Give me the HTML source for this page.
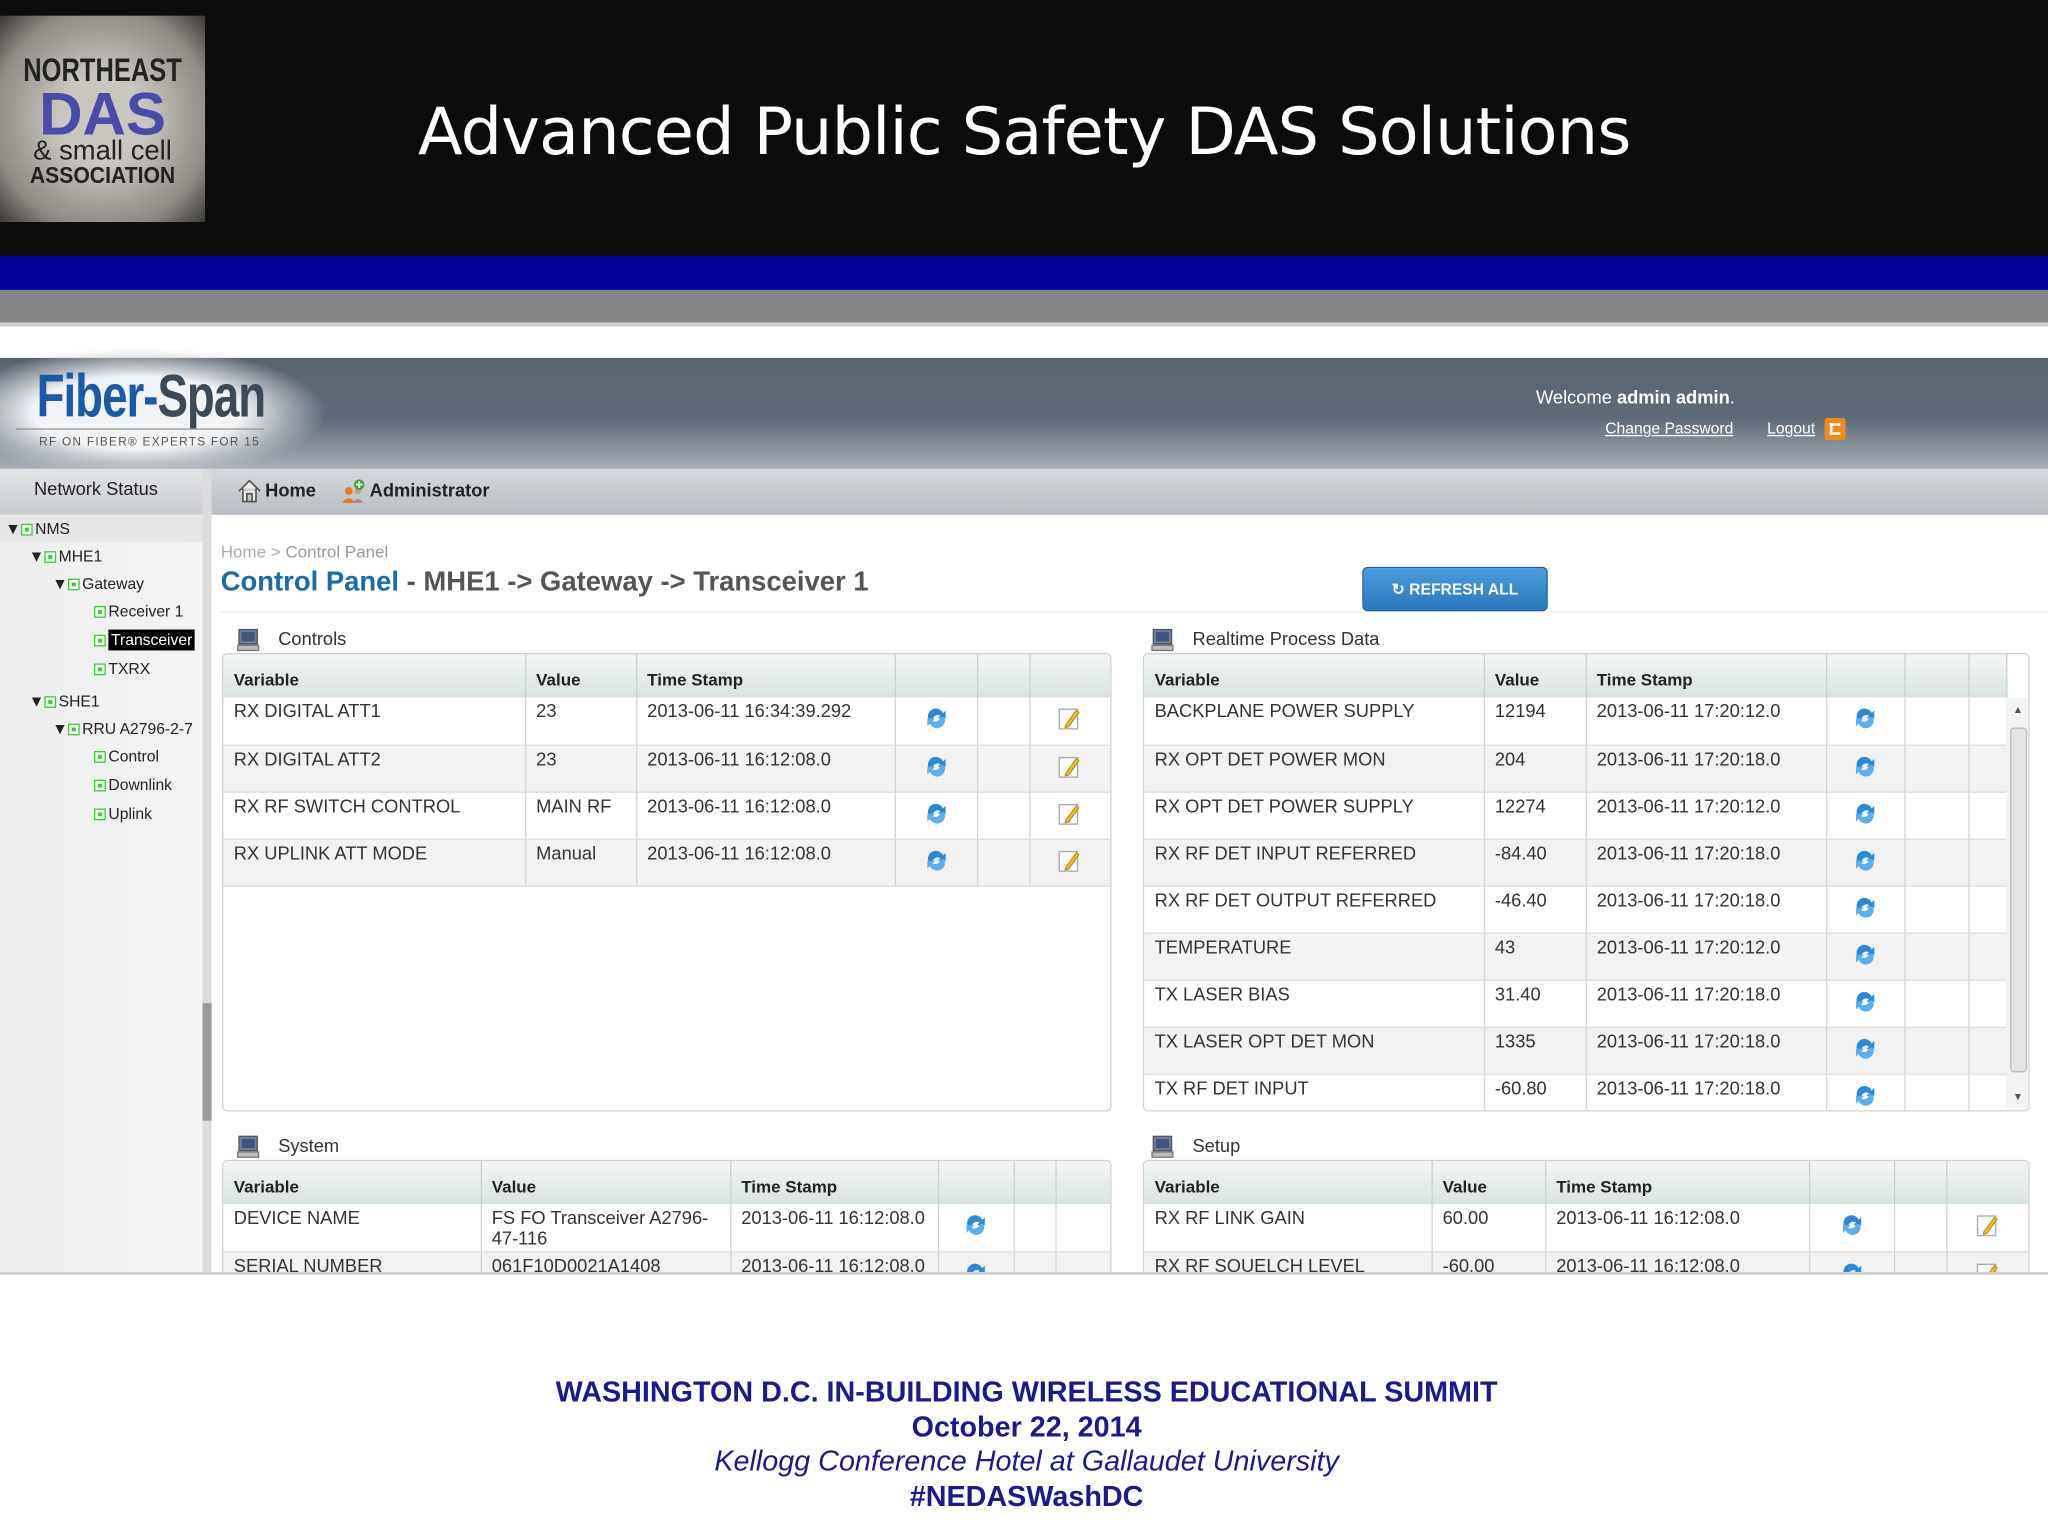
<!DOCTYPE html>
<html><head><meta charset="utf-8"><style>
*{margin:0;padding:0;box-sizing:border-box}
html,body{width:2048px;height:1536px;overflow:hidden;background:#fff}
#w{position:absolute;left:0;top:0;width:1568px;height:1176px;transform:scale(1.306122);transform-origin:0 0;font-family:"Liberation Sans",Arial,sans-serif;background:#fff}
.a{position:absolute}
table{border-collapse:collapse;position:absolute;font-size:14px;color:#333;table-layout:fixed}
td{border-right:1px solid #d4d4d4;vertical-align:top;padding:2px 8px;height:36px;border-bottom:1px solid #ddd}
tr.h td{height:33px;background:linear-gradient(#f2f5f5,#d9e2e2);font-weight:bold;font-size:13px;vertical-align:middle;padding-top:8px;color:#222;border-right:1px solid #c8d0d0;border-bottom:none}
tr.g td{background:#f2f2f2}
.panel{position:absolute;border:1px solid #d0d0d0;border-radius:4px;background:#fff;overflow:hidden}
.ptitle{position:absolute;font-size:14px;color:#333}
.tree{position:absolute;font-size:12px;color:#222;white-space:nowrap}
.sq{display:inline-block;width:9px;height:9px;border:1px solid #3c3;margin-right:2px;vertical-align:-1px;position:relative;background:#fff}
.sq:after{content:"";position:absolute;left:2px;top:2px;width:3px;height:3px;background:#3c3}
</style></head><body><div id="w">
<div class="a" style="left:0;top:0;width:1568px;height:196px;background:#0b0b0b"></div>
<div class="a" style="left:0;top:12px;width:157px;height:158px;background:radial-gradient(ellipse at center,#c9c5bf 30%,#8e8a84 75%,#3a3835 100%)"></div>
<div class="a" style="left:0;top:40px;width:157px;text-align:center;font:bold 25px 'Liberation Sans Narrow','Liberation Sans',sans-serif;color:#222;transform:scaleX(.78)">NORTHEAST</div>
<div class="a" style="left:0;top:64px;width:157px;text-align:center;font:bold 46px 'Liberation Sans',sans-serif;color:#4a4aa8;line-height:46px">DAS</div>
<div class="a" style="left:0;top:104px;width:157px;text-align:center;font:21px 'Liberation Sans',sans-serif;color:#222">&amp; small cell</div>
<div class="a" style="left:0;top:124px;width:157px;text-align:center;font:bold 18px 'Liberation Sans',sans-serif;color:#222;transform:scaleX(.9)">ASSOCIATION</div>
<div class="a" style="left:320px;top:72px;font:50px 'DejaVu Sans','Liberation Sans',sans-serif;color:#fff;letter-spacing:-0.65px;white-space:nowrap">Advanced Public Safety DAS Solutions</div>
<div class="a" style="left:0;top:196px;width:1568px;height:26px;background:#02029a"></div>
<div class="a" style="left:0;top:222px;width:1568px;height:25px;background:#848385"></div>
<div class="a" style="left:0;top:247px;width:1568px;height:3px;background:#d0d0d4"></div>
<div class="a" style="left:0;top:274px;width:1568px;height:85px;background:linear-gradient(#58636f 0%,#5f6b78 55%,#a9b0b8 100%)"></div>
<div class="a" style="left:-40px;top:266px;width:290px;height:100px;background:radial-gradient(ellipse closest-side at 50% 50%,rgba(242,243,244,1) 55%,rgba(200,205,210,.6) 80%,rgba(120,130,140,0) 100%)"></div>
<div class="a" style="left:28px;top:276px;font:bold 46px 'Liberation Sans Narrow','Liberation Sans',sans-serif;color:#1b5aa6;letter-spacing:-1px;transform:scaleX(.76);transform-origin:0 0;white-space:nowrap">Fiber-<span style="color:#3c4a58">Span</span></div>
<div class="a" style="left:30px;top:333px;font:9px 'Liberation Sans',sans-serif;color:#555;letter-spacing:1px;white-space:nowrap;width:170px;overflow:hidden">RF ON FIBER® EXPERTS FOR 15 YEARS</div>
<div class="a" style="left:12px;top:328px;width:190px;height:1px;background:#999"></div>
<div class="a" style="left:1176px;top:296px;font-size:14px;color:#fff;white-space:nowrap">Welcome <b>admin admin</b>.</div>
<div class="a" style="left:1229px;top:321px;font-size:12px;color:#fff;text-decoration:underline;white-space:nowrap">Change Password</div>
<div class="a" style="left:1353px;top:321px;font-size:12px;color:#fff;text-decoration:underline">Logout</div>
<div class="a" style="left:1397px;top:320px;width:16px;height:17px;background:#f08a1c;border-radius:2px"><div class="a" style="left:4px;top:4px;width:8px;height:9px;border:2px solid #fff;border-right:none"></div></div>
<div class="a" style="left:0;top:359px;width:1568px;height:35px;background:linear-gradient(#d6dade,#b9bec4);border-bottom:1px solid #aab"></div>
<div class="a" style="left:0;top:359px;width:156px;height:35px;background:linear-gradient(#e2e4e6,#c9ccd0)"></div>
<div class="a" style="left:26px;top:366px;font-size:14px;color:#222">Network Status</div>
<svg class="a" style="left:181px;top:366px" width="20" height="20" viewBox="0 0 20 20"><path d="M2 10 L10 2 L18 10 M5 8 V18 H15 V8 M8 18 V12 H12 V18" fill="#eee" stroke="#555" stroke-width="1.3"/></svg>
<div class="a" style="left:203px;top:367px;font-size:14px;font-weight:bold;color:#222">Home</div>
<svg class="a" style="left:261px;top:366px" width="20" height="20" viewBox="0 0 20 20"><circle cx="6" cy="10" r="3" fill="#e87a20"/><path d="M1 19 Q6 12 11 19Z" fill="#e87a20"/><circle cx="13" cy="10" r="2.5" fill="#c9a27a"/><path d="M9 19 Q13 13 17 19Z" fill="#a88"/><circle cx="14" cy="5" r="4" fill="#3a3"/><path d="M14 2.5V7.5M11.5 5H16.5" stroke="#fff" stroke-width="1.5"/></svg>
<div class="a" style="left:283px;top:367px;font-size:14px;font-weight:bold;color:#222">Administrator</div>
<div class="a" style="left:0;top:394px;width:156px;height:581px;background:linear-gradient(90deg,#ededed,#f4f4f4)"></div>
<div class="a" style="left:0;top:394px;width:156px;height:21px;background:#e6e6e6"></div>
<div class="a" style="left:155px;top:359px;width:7px;height:616px;background:#dcdcdc"></div>
<div class="a" style="left:155px;top:768px;width:7px;height:90px;background:#9a9a9a"></div>
<div class="tree" style="left:4px;top:398px">▼<span class="sq"></span>NMS</div>
<div class="tree" style="left:22px;top:419px">▼<span class="sq"></span>MHE1</div>
<div class="tree" style="left:40px;top:440px">▼<span class="sq"></span>Gateway</div>
<div class="tree" style="left:72px;top:461px"><span class="sq"></span>Receiver 1</div>
<div class="tree" style="left:72px;top:483px"><span class="sq"></span><span style="background:#000;color:#fff;padding:1px 2px">Transceiver</span></div>
<div class="tree" style="left:72px;top:505px"><span class="sq"></span>TXRX</div>
<div class="tree" style="left:22px;top:530px">▼<span class="sq"></span>SHE1</div>
<div class="tree" style="left:40px;top:551px">▼<span class="sq"></span>RRU A2796-2-7</div>
<div class="tree" style="left:72px;top:572px"><span class="sq"></span>Control</div>
<div class="tree" style="left:72px;top:594px"><span class="sq"></span>Downlink</div>
<div class="tree" style="left:72px;top:616px"><span class="sq"></span>Uplink</div>
<div class="a" style="left:169px;top:415px;font-size:13px;color:#aaa">Home &gt; <span style="color:#999">Control Panel</span></div>
<div class="a" style="left:169px;top:434px;font-size:21px;font-weight:bold;color:#555;white-space:nowrap"><span style="color:#1a6aa8">Control Panel</span> - MHE1 -&gt; Gateway -&gt; Transceiver 1</div>
<div class="a" style="left:169px;top:468px;width:1399px;border-top:1px dotted #ddd"></div>
<div class="a" style="left:1043px;top:434px;width:142px;height:34px;border-radius:4px;background:linear-gradient(#4a9ede,#2a77bd);border:1px solid #1d5f99;color:#fff;font-size:12px;font-weight:bold;text-align:center;line-height:33px">↻ REFRESH ALL</div>
<svg width="0" height="0" style="position:absolute"><defs>
<symbol id="r" viewBox="0 0 20 20"><path d="M4 11 A6 6 0 0 1 15 6 L17 4 L17 10 L11 10 L13 8 A4 4 0 0 0 7 11Z" fill="#2a8ad8"/><path d="M16 9 A6 6 0 0 1 5 14 L3 16 L3 10 L9 10 L7 12 A4 4 0 0 0 13 9Z" fill="#5ab0ee"/></symbol>
<symbol id="e" viewBox="0 0 20 20"><rect x="2" y="3" width="14" height="15" fill="#fafafa" stroke="#aaa"/><path d="M7 15 L15 4 L17 5.5 L9 16.5 L6.5 17Z" fill="#f2c21a" stroke="#b08a10" stroke-width=".8"/></symbol>
<symbol id="pc" viewBox="0 0 20 20"><rect x="3" y="2" width="14" height="11" fill="#6b7ea0" stroke="#555"/><rect x="5" y="4" width="10" height="7" fill="#3e5580"/><rect x="2" y="14" width="16" height="4" fill="#bbb" stroke="#777"/></symbol>
</defs></svg>
<svg class="a" style="left:180px;top:480px" width="20" height="20"><use href="#pc"/></svg>
<div class="ptitle" style="left:213px;top:481px">Controls</div>
<div class="panel" style="left:170px;top:500px;width:681px;height:351px">
<table style="left:0;top:0;width:679px">
<colgroup><col style="width:231px"><col style="width:85px"><col style="width:198px"><col style="width:63px"><col style="width:40px"><col style="width:62px"></colgroup>
<tr class="h"><td>Variable</td><td>Value</td><td>Time Stamp</td><td></td><td></td><td style="border-right:none"></td></tr>
<tr><td>RX DIGITAL ATT1</td><td>23</td><td>2013-06-11 16:34:39.292</td><td style="text-align:center;padding-top:6px"><svg width="20" height="20"><use href="#r"/></svg></td><td></td><td style="text-align:center;padding-top:6px;border-right:none"><svg width="20" height="20"><use href="#e"/></svg></td></tr>
<tr class="g"><td>RX DIGITAL ATT2</td><td>23</td><td>2013-06-11 16:12:08.0</td><td style="text-align:center;padding-top:6px"><svg width="20" height="20"><use href="#r"/></svg></td><td></td><td style="text-align:center;padding-top:6px;border-right:none"><svg width="20" height="20"><use href="#e"/></svg></td></tr>
<tr><td>RX RF SWITCH CONTROL</td><td>MAIN RF</td><td>2013-06-11 16:12:08.0</td><td style="text-align:center;padding-top:6px"><svg width="20" height="20"><use href="#r"/></svg></td><td></td><td style="text-align:center;padding-top:6px;border-right:none"><svg width="20" height="20"><use href="#e"/></svg></td></tr>
<tr class="g"><td>RX UPLINK ATT MODE</td><td>Manual</td><td>2013-06-11 16:12:08.0</td><td style="text-align:center;padding-top:6px"><svg width="20" height="20"><use href="#r"/></svg></td><td></td><td style="text-align:center;padding-top:6px;border-right:none"><svg width="20" height="20"><use href="#e"/></svg></td></tr>
</table></div>
<svg class="a" style="left:880px;top:480px" width="20" height="20"><use href="#pc"/></svg>
<div class="ptitle" style="left:913px;top:481px">Realtime Process Data</div>
<div class="panel" style="left:875px;top:500px;width:679px;height:351px">
<table style="left:0;top:0;width:660px">
<colgroup><col style="width:260px"><col style="width:78px"><col style="width:184px"><col style="width:60px"><col style="width:49px"><col style="width:29px"></colgroup>
<tr class="h"><td>Variable</td><td>Value</td><td>Time Stamp</td><td></td><td></td><td></td></tr>
<tr><td>BACKPLANE POWER SUPPLY</td><td>12194</td><td>2013-06-11 17:20:12.0</td><td style="text-align:center;padding-top:6px"><svg width="20" height="20"><use href="#r"/></svg></td><td></td><td></td></tr>
<tr class="g"><td>RX OPT DET POWER MON</td><td>204</td><td>2013-06-11 17:20:18.0</td><td style="text-align:center;padding-top:6px"><svg width="20" height="20"><use href="#r"/></svg></td><td></td><td></td></tr>
<tr><td>RX OPT DET POWER SUPPLY</td><td>12274</td><td>2013-06-11 17:20:12.0</td><td style="text-align:center;padding-top:6px"><svg width="20" height="20"><use href="#r"/></svg></td><td></td><td></td></tr>
<tr class="g"><td>RX RF DET INPUT REFERRED</td><td>-84.40</td><td>2013-06-11 17:20:18.0</td><td style="text-align:center;padding-top:6px"><svg width="20" height="20"><use href="#r"/></svg></td><td></td><td></td></tr>
<tr><td>RX RF DET OUTPUT REFERRED</td><td>-46.40</td><td>2013-06-11 17:20:18.0</td><td style="text-align:center;padding-top:6px"><svg width="20" height="20"><use href="#r"/></svg></td><td></td><td></td></tr>
<tr class="g"><td>TEMPERATURE</td><td>43</td><td>2013-06-11 17:20:12.0</td><td style="text-align:center;padding-top:6px"><svg width="20" height="20"><use href="#r"/></svg></td><td></td><td></td></tr>
<tr><td>TX LASER BIAS</td><td>31.40</td><td>2013-06-11 17:20:18.0</td><td style="text-align:center;padding-top:6px"><svg width="20" height="20"><use href="#r"/></svg></td><td></td><td></td></tr>
<tr class="g"><td>TX LASER OPT DET MON</td><td>1335</td><td>2013-06-11 17:20:18.0</td><td style="text-align:center;padding-top:6px"><svg width="20" height="20"><use href="#r"/></svg></td><td></td><td></td></tr>
<tr><td>TX RF DET INPUT</td><td>-60.80</td><td>2013-06-11 17:20:18.0</td><td style="text-align:center;padding-top:6px"><svg width="20" height="20"><use href="#r"/></svg></td><td></td><td></td></tr>
</table>
<div class="a" style="left:660px;top:33px;width:18px;height:318px;background:#f4f4f4"></div>
<div class="a" style="left:663px;top:56px;width:13px;height:264px;background:#e4e4e4;border:1px solid #bbb;border-radius:3px"></div>
<div class="a" style="left:665px;top:38px;font-size:8px;color:#555">▲</div>
<div class="a" style="left:665px;top:334px;font-size:8px;color:#555">▼</div>
</div>
<svg class="a" style="left:180px;top:868px" width="20" height="20"><use href="#pc"/></svg>
<div class="ptitle" style="left:213px;top:869px">System</div>
<div class="panel" style="left:170px;top:888px;width:681px;height:120px">
<table style="left:0;top:0;width:679px">
<colgroup><col style="width:197px"><col style="width:191px"><col style="width:159px"><col style="width:58px"><col style="width:32px"><col style="width:42px"></colgroup>
<tr class="h"><td>Variable</td><td>Value</td><td>Time Stamp</td><td></td><td></td><td style="border-right:none"></td></tr>
<tr><td>DEVICE NAME</td><td>FS FO Transceiver A2796-47-116</td><td>2013-06-11 16:12:08.0</td><td style="text-align:center;padding-top:6px"><svg width="20" height="20"><use href="#r"/></svg></td><td></td><td style="border-right:none"></td></tr>
<tr class="g"><td>SERIAL NUMBER</td><td>061F10D0021A1408</td><td>2013-06-11 16:12:08.0</td><td style="text-align:center;padding-top:6px"><svg width="20" height="20"><use href="#r"/></svg></td><td></td><td style="border-right:none"></td></tr>
</table></div>
<svg class="a" style="left:880px;top:868px" width="20" height="20"><use href="#pc"/></svg>
<div class="ptitle" style="left:913px;top:869px">Setup</div>
<div class="panel" style="left:875px;top:888px;width:679px;height:120px">
<table style="left:0;top:0;width:677px">
<colgroup><col style="width:220px"><col style="width:87px"><col style="width:202px"><col style="width:65px"><col style="width:40px"><col style="width:63px"></colgroup>
<tr class="h"><td>Variable</td><td>Value</td><td>Time Stamp</td><td></td><td></td><td style="border-right:none"></td></tr>
<tr><td>RX RF LINK GAIN</td><td>60.00</td><td>2013-06-11 16:12:08.0</td><td style="text-align:center;padding-top:6px"><svg width="20" height="20"><use href="#r"/></svg></td><td></td><td style="text-align:center;padding-top:6px;border-right:none"><svg width="20" height="20"><use href="#e"/></svg></td></tr>
<tr class="g"><td>RX RF SQUELCH LEVEL</td><td>-60.00</td><td>2013-06-11 16:12:08.0</td><td style="text-align:center;padding-top:6px"><svg width="20" height="20"><use href="#r"/></svg></td><td></td><td style="text-align:center;padding-top:6px;border-right:none"><svg width="20" height="20"><use href="#e"/></svg></td></tr>
</table></div>
<div class="a" style="left:0;top:974px;width:1568px;height:202px;background:#fff;border-top:2px solid #ccc"></div>
<div class="a" style="left:0;top:1053px;width:1572px;text-align:center;color:#1a1a8c;font-size:22px;line-height:26.5px">
<div style="font-weight:bold">WASHINGTON D.C. IN-BUILDING WIRELESS EDUCATIONAL SUMMIT</div>
<div style="font-weight:bold">October 22, 2014</div>
<div style="font-style:italic">Kellogg Conference Hotel at Gallaudet University</div>
<div style="font-weight:bold">#NEDASWashDC</div>
</div>
</div></body></html>
